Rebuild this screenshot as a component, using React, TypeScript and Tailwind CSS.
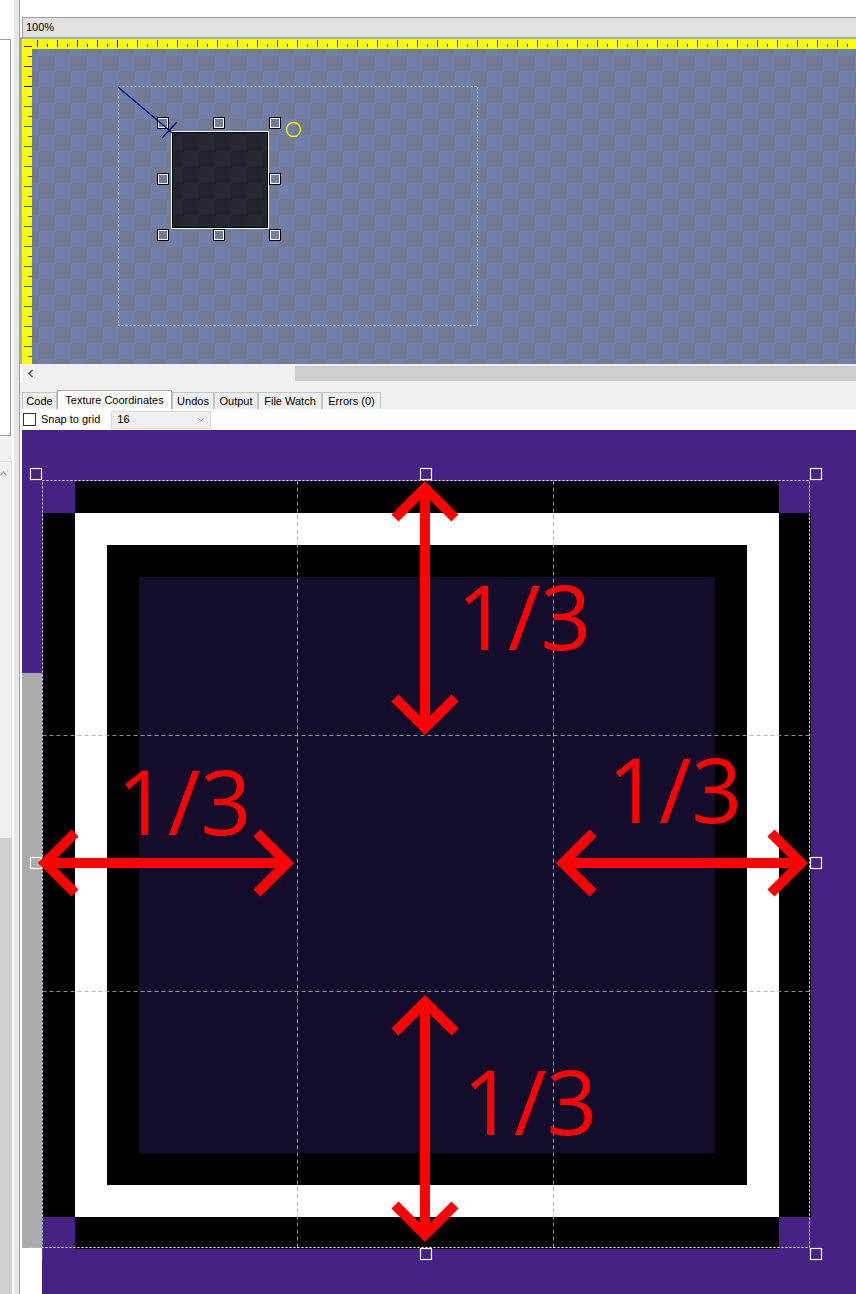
import React from "react";

const RED_TICK = "#8b0000";
const GREEN_TICK = "#007800";
const PURPLE = "#452283";

function TopRuler() {
  const ticks: React.ReactNode[] = [];
  for (let k = 0; 5 + 10 * k < 824; k++) {
    const x = 5 + 10 * k;
    const big = k % 2 === 0;
    const color = k < 8 ? RED_TICK : k === 8 ? "#000000" : GREEN_TICK;
    ticks.push(<rect key={k} x={x} y={big ? 1 : 5} width={1} height={big ? 7 : 3} fill={color} />);
  }
  return (
    <svg width={824} height={10} className="block">
      {ticks}
    </svg>
  );
}

function LeftRuler() {
  const ticks: React.ReactNode[] = [];
  for (let k = 0; 7 + 10 * k < 325; k++) {
    const y = 7 + 10 * k;
    const big = k % 2 === 0;
    const color = k < 4 ? RED_TICK : k === 4 ? "#000000" : GREEN_TICK;
    ticks.push(<rect key={k} x={big ? 2 : 6} y={y} width={big ? 8 : 4} height={1} fill={color} />);
  }
  return (
    <svg width={10} height={325} className="block">
      {ticks}
    </svg>
  );
}

function Canvas() {
  const handles = [
    [131, 74],
    [187, 74],
    [243, 74],
    [131, 130],
    [243, 130],
    [131, 186],
    [187, 186],
    [243, 186],
  ];
  return (
    <svg width={824} height={315} className="block">
      <defs>
        <pattern id="chk" patternUnits="userSpaceOnUse" x={7} y={6} width={32} height={32}>
          <rect width={32} height={32} fill="#737c94" />
          <rect x={16} y={0} width={16} height={16} fill="#7080a9" />
          <rect x={0} y={16} width={16} height={16} fill="#7080a9" />
        </pattern>
        <pattern id="chkd" patternUnits="userSpaceOnUse" x={7} y={6} width={32} height={32}>
          <rect width={32} height={32} fill="#22252d" />
          <rect x={16} y={0} width={16} height={16} fill="#25282f" />
          <rect x={0} y={16} width={16} height={16} fill="#25282f" />
        </pattern>
      </defs>
      <rect width={824} height={315} fill="url(#chk)" />
      <rect x={86.5} y={37.5} width={359} height={239} fill="none" stroke="#b4dcf0" strokeWidth={1} strokeDasharray="2 2" />
      <rect x={141} y={84} width={94} height={94} fill="url(#chkd)" />
      <rect x={140.5} y={83.5} width={95} height={95} fill="none" stroke="#000000" strokeWidth={1} />
      <rect x={139.5} y={82.5} width={97} height={97} fill="none" stroke="#ffffff" strokeWidth={1} />
      {handles.map(([cx, cy], i) => (
        <g key={i}>
          <rect x={cx - 5.5} y={cy - 5.5} width={11} height={11} fill="none" stroke="#000000" strokeWidth={1} />
          <rect x={cx - 4.5} y={cy - 4.5} width={9} height={9} fill="none" stroke="#ffffff" strokeWidth={1} />
        </g>
      ))}
      <line x1={86} y1={38} x2={144} y2={87} stroke="#000080" strokeWidth={1.2} />
      <line x1={130} y1={89} x2={145} y2={73} stroke="#000080" strokeWidth={1.2} />
      <circle cx={261.5} cy={80.5} r={7} fill="none" stroke="#ffff00" strokeWidth={1.3} />
    </svg>
  );
}

function CanvasPanel() {
  return (
    <div className="flex flex-col shrink-0">
      <div className="ml-[2px] h-[20px] border-t border-l border-[#a0a0a0] bg-[#e1e1e1] flex items-center pl-[3px]">
        100%
      </div>
      <div className="flex border-t-2 border-l-2 border-[#a3abc1]">
        <div className="w-[10px] bg-[#ffff00]">
          <LeftRuler />
        </div>
        <div className="flex flex-col">
          <div className="h-[10px] bg-[#ffff00]">
            <TopRuler />
          </div>
          <Canvas />
        </div>
      </div>
      <div className="ml-[2px] h-[18px] bg-[#f0f0f0] flex items-center">
        <div className="w-[17px] flex items-center justify-center">
          <svg width={8} height={9}>
            <polyline points="5.5,1 2,4.5 5.5,8" fill="none" stroke="#606060" strokeWidth={1.6} />
          </svg>
        </div>
        <div className="w-[256px]" />
        <div className="flex-1 h-[15px] bg-[#cdcdcd]" />
      </div>
    </div>
  );
}

function Tabs() {
  const tabs = [
    { label: "Code", w: "w-[35px]" },
    { label: "Texture Coordinates", w: "w-[115px]", active: true },
    { label: "Undos", w: "w-[42px]" },
    { label: "Output", w: "w-[44px]" },
    { label: "File Watch", w: "w-[64px]" },
    { label: "Errors (0)", w: "w-[59px]" },
  ];
  return (
    <div className="h-[27px] bg-[#f0f0f0] flex items-end pl-[2px] shrink-0">
      {tabs.map((t) =>
        t.active ? (
          <div
            key={t.label}
            className={`${t.w} h-[19px] bg-white border-t border-l border-r border-[#acacac] flex items-center justify-center whitespace-nowrap`}
          >
            {t.label}
          </div>
        ) : (
          <div
            key={t.label}
            className={`${t.w} h-[17px] bg-[#f0f0f0] border-t border-l border-r border-[#c4c4c4] flex items-center justify-center whitespace-nowrap`}
          >
            {t.label}
          </div>
        )
      )}
    </div>
  );
}

function Options() {
  return (
    <div className="h-[21px] bg-white flex items-center pl-[3px] shrink-0">
      <div className="w-[13px] h-[13px] border border-[#333333] bg-white" />
      <span className="ml-[5px]">Snap to grid</span>
      <div className="ml-[11px] w-[100px] h-[18px] border border-[#d9d9d9] bg-[#f0f0f0] flex items-center justify-between pl-[5px] pr-[6px]">
        <span>16</span>
        <svg width={6} height={4}>
          <polyline points="0.5,0.5 3,3 5.5,0.5" fill="none" stroke="#a0a0a0" strokeWidth={1} />
        </svg>
      </div>
    </div>
  );
}

function Arrow({ pts }: { pts: string[] }) {
  return (
    <g stroke="#ff0000" strokeWidth={10} fill="none" strokeLinejoin="miter" strokeMiterlimit={4}>
      {pts.map((p, i) => (
        <polyline key={i} points={p} />
      ))}
    </g>
  );
}

function TextureOverlay() {
  const ox = 21;
  const oy = 51;
  const handles = [
    [14, 44],
    [404, 44],
    [794, 44],
    [14, 433],
    [794, 433],
    [14, 824],
    [404, 824],
    [794, 824],
  ];
  const font = "'Open Sans', 'Noto Sans', sans-serif";
  return (
    <svg width={834} height={864} className="absolute left-0 top-0">
      <rect x={ox} y={oy} width={768} height={768} fill="#000000" />
      <rect x={ox} y={oy} width={32} height={32} fill={PURPLE} />
      <rect x={ox + 736} y={oy} width={32} height={32} fill={PURPLE} />
      <rect x={ox} y={oy + 736} width={32} height={32} fill={PURPLE} />
      <rect x={ox + 736} y={oy + 736} width={32} height={32} fill={PURPLE} />
      <rect x={ox + 32} y={oy + 32} width={704} height={704} fill="#ffffff" />
      <rect x={ox + 64} y={oy + 64} width={640} height={640} fill="#000000" />
      <rect x={ox + 96} y={oy + 96} width={576} height={576} fill="#140c2a" />

      <g stroke="#a8a8a8" strokeWidth={1} strokeDasharray="4 3" opacity={0.85}>
        <line x1={275.5} y1={50.5} x2={275.5} y2={817.5} />
        <line x1={531.5} y1={50.5} x2={531.5} y2={817.5} />
        <line x1={20.5} y1={305.5} x2={787.5} y2={305.5} />
        <line x1={20.5} y1={561.5} x2={787.5} y2={561.5} />
      </g>

      <rect x={20.5} y={50.5} width={767} height={767} fill="none" stroke="#ffffff" strokeWidth={1} strokeDasharray="2 2" />

      {handles.map(([cx, cy], i) => (
        <rect key={i} x={cx - 5.5} y={cy - 5.5} width={11} height={11} fill="none" stroke="#ffffff" strokeWidth={1.2} />
      ))}

      <Arrow pts={["403,58 403,298", "373,88 403,58 433,88", "373,268 403,298 433,268"]} />
      <Arrow pts={["403,572 403,805", "373,602 403,572 433,602", "373,775 403,805 433,775"]} />
      <Arrow pts={["23,433 265,433", "53,403 23,433 53,463", "235,403 265,433 235,463"]} />
      <Arrow pts={["541,433 779,433", "571,403 541,433 571,463", "749,403 779,433 749,463"]} />

      <g fill="#ff0000" fontFamily={font} fontSize={89}>
        <text x={435} y={220}>1/3</text>
        <text x={95} y={405}>1/3</text>
        <text x={586} y={393}>1/3</text>
        <text x={441} y={705}>1/3</text>
      </g>
    </svg>
  );
}

function TextureView() {
  return (
    <div className="flex-1 pl-[2px] bg-white flex min-h-0">
      <div className="relative flex-1 flex">
        <div className="w-[20px] flex flex-col">
          <div className="h-[243px] bg-[#452283]" />
          <div className="h-[575px] bg-[#ababab]" />
          <div className="flex-1 bg-white" />
        </div>
        <div className="flex-1 bg-[#452283]" />
        <TextureOverlay />
      </div>
    </div>
  );
}

function LeftEdge() {
  return (
    <div className="w-[20px] shrink-0 flex h-full">
      <div className="w-[12px] flex flex-col">
        <div className="h-[39px] bg-white" />
        <div className="h-[397px] w-[11px] border-t border-r border-b border-[#a0a0a0] bg-white" />
        <div className="h-[25px] bg-[#f0f0f0]" />
        <div className="h-[377px] bg-[#f0f0f0] border-t border-r border-[#dcdcdc] pt-[9px]">
          <svg width={8} height={5} className="block">
            <polyline points="0.5,4.5 3.5,1 6.5,4.5" fill="none" stroke="#a8a8a8" strokeWidth={1.2} />
          </svg>
        </div>
        <div className="flex-1 bg-[#d0d0d0]" />
      </div>
      <div className="w-[2px] bg-white" />
      <div className="w-[5px] bg-[#e6e6e6]" />
      <div className="w-[1px] bg-[#a0a0a0]" />
    </div>
  );
}

export default function App() {
  return (
    <div className="w-[856px] h-[1294px] overflow-hidden bg-white flex font-['Liberation_Sans',Arial,sans-serif] text-[11px] leading-none text-black">
      <LeftEdge />
      <main className="flex-1 flex flex-col min-w-0">
        <div className="h-[17px] shrink-0" />
        <CanvasPanel />
        <Tabs />
        <Options />
        <TextureView />
      </main>
    </div>
  );
}
